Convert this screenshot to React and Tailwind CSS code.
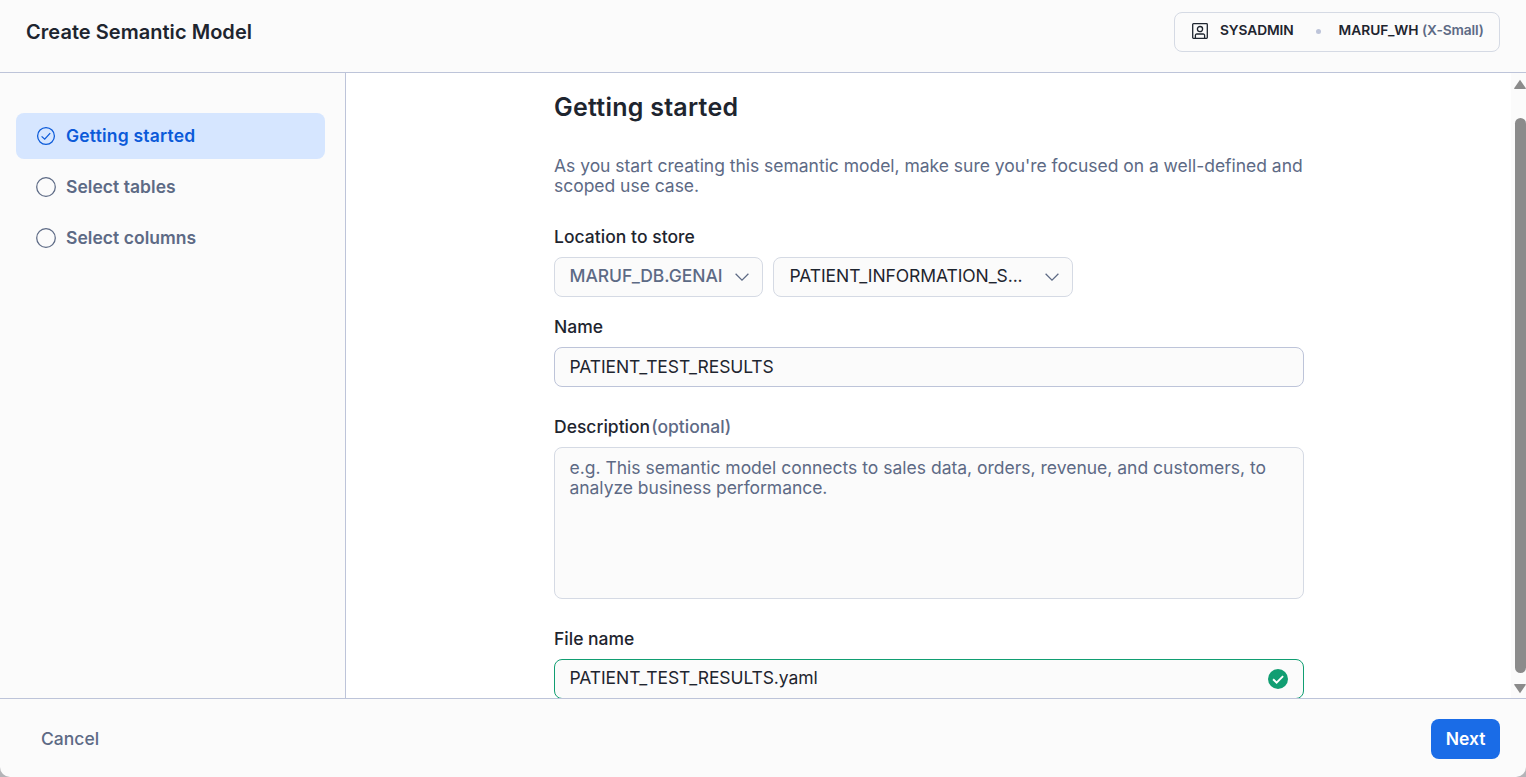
import React from "react";

const steps = [
  { label: "Getting started", active: true },
  { label: "Select tables", active: false },
  { label: "Select columns", active: false },
];

function StepIcon({ active }) {
  if (active) {
    return (
      <svg className="size-5 shrink-0" viewBox="0 0 20 20" fill="none" stroke="currentColor" strokeWidth="1.25">
        <circle cx="10" cy="10" r="8.4" />
        <path d="M5.6 10.4 8.7 13.2 14.2 7.2" />
      </svg>
    );
  }
  return (
    <svg className="size-5 shrink-0" viewBox="0 0 20 20" fill="none" stroke="currentColor" strokeWidth="1.25">
      <circle cx="10" cy="10" r="9.3" />
    </svg>
  );
}

function Chevron() {
  return (
    <svg className="h-2 w-3.5 shrink-0 text-[#5d6a85]" viewBox="0 0 14 8" fill="none" stroke="currentColor" strokeWidth="1.25">
      <path d="M0.6 0.8 7 7.1 13.4 0.8" />
    </svg>
  );
}

function RoleIcon() {
  return (
    <svg className="size-4 shrink-0" viewBox="0 0 16 16" fill="none" stroke="currentColor" strokeWidth="1.3">
      <rect x="0.7" y="0.7" width="14.6" height="14.6" rx="0.8" />
      <circle cx="8" cy="6.1" r="2.6" />
      <path d="M3.4 15v-2.6a1.4 1.4 0 0 1 1.4-1.4h6.4a1.4 1.4 0 0 1 1.4 1.4V15" />
    </svg>
  );
}

function Header() {
  return (
    <header className="flex h-[73px] shrink-0 items-start justify-between border-b border-[#bdc4d9] bg-[#fbfbfb] pr-[26px] pl-[26px]">
      <h1 className="pt-5 text-[20px] leading-[25px] font-semibold tracking-[0.04px]">Create Semantic Model</h1>
      <div className="mt-3 flex h-10 w-[326px] items-center rounded-lg border border-[#d5dae4] pb-0.5 pl-[17px] text-[13.75px] leading-5 font-semibold whitespace-nowrap">
        <RoleIcon />
        <span className="ml-3 w-[75px] pb-0.5 tracking-[-0.1px]">SYSADMIN</span>
        <span className="ml-[21px] size-[5px] rounded-full bg-[#bdc4d9]" />
        <span className="ml-[17.5px] pb-0.5">
          MARUF_WH <span className="tracking-[-0.1px] text-[#5d6a85]">(X-Small)</span>
        </span>
      </div>
    </header>
  );
}

function Sidebar() {
  return (
    <nav className="flex w-[346px] shrink-0 flex-col gap-[5px] border-r border-[#bdc4d9] bg-[#fbfbfb] px-4 pt-10">
      {steps.map((step) => (
        <div
          key={step.label}
          className={
            step.active
              ? "flex h-[46px] w-[309px] items-center gap-2.5 rounded-lg bg-[#d6e6ff] pl-5 text-[17.5px] font-semibold tracking-[0.2px] text-[#0b5ad9]"
              : "flex h-[46px] w-[309px] items-center gap-2.5 rounded-lg pl-5 text-[17.5px] font-semibold tracking-[0.04px] text-[#5d6a85]"
          }
        >
          <StepIcon active={step.active} />
          <span>{step.label}</span>
        </div>
      ))}
    </nav>
  );
}

function Scrollbar() {
  return (
    <div className="flex w-[15px] shrink-0 flex-col items-center overflow-hidden bg-[#fbfbfb] pt-[5.5px] pb-[4px] pl-[3px]">
      <svg className="h-[11px] w-3 shrink-0" viewBox="0 0 12 11" fill="#8b8b8b">
        <path d="M6 .8 11.7 9q.6 1-.5 1H.8Q-.3 10 .3 9Z" />
      </svg>
      <div className="mt-[28.5px] h-[555px] w-[11px] shrink-0 rounded-full bg-[#8b8b8b]" />
      <svg className="mt-[9.5px] h-[11px] w-3 shrink-0" viewBox="0 0 12 11" fill="#8b8b8b">
        <path d="M6 10.2 11.7 2q.6-1-.5-1H.8Q-.3 1 .3 2Z" />
      </svg>
    </div>
  );
}

function Form() {
  return (
    <main className="min-w-0 flex-1 overflow-hidden bg-white pl-[208px] text-[17.5px] leading-5">
      <div className="w-[750px]">
        <h2 className="pt-[19px] text-[25px] leading-[30px] font-semibold tracking-[0.25px]">Getting started</h2>
        <p className="mt-[34px] tracking-[-0.025px] whitespace-nowrap text-[#5d6a85]">
          As you start creating this semantic model, make sure you're focused on a well-defined and
          <br />
          scoped use case.
        </p>

        <div className="mt-[31px] font-medium tracking-[0.03px]">Location to store</div>
        <div className="mt-[10px] flex gap-2.5">
          <div className="flex h-10 w-[209px] items-center rounded-lg border border-[#d5dae4] bg-[#fbfbfb] pl-[14.5px] font-medium text-[#5d6a85]">
            <span className="w-[153px] pb-0.5 tracking-[-0.05px] whitespace-nowrap">MARUF_DB.GENAI</span>
            <span className="ml-[12.5px] flex pb-px"><Chevron /></span>
          </div>
          <div className="flex h-10 w-[300px] items-center justify-between rounded-lg border border-[#d5dae4] bg-[#fbfbfb] pr-[13px] pl-[15.5px]">
            <span className="pb-0.5 tracking-[-0.09px] whitespace-nowrap">PATIENT_INFORMATION_S...</span>
            <span className="flex pb-px"><Chevron /></span>
          </div>
        </div>

        <div className="mt-5 font-medium">Name</div>
        <div className="mt-[10px] flex h-10 items-center rounded-lg border border-[#bdc4d9] bg-[#fbfbfb] pl-[14.5px] tracking-[-0.1px]">
          PATIENT_TEST_RESULTS
        </div>

        <div className="mt-[30px] flex gap-px font-medium">
          <span>Description</span>
          <span className="text-[#5d6a85]">(optional)</span>
        </div>
        <div className="mt-[10px] h-[152px] rounded-lg border border-[#d5dae4] bg-[#fbfbfb] pt-[10px] pl-[14.5px] whitespace-nowrap text-[#5d6a85]">
          e.g. This semantic model connects to sales data, orders, revenue, and customers, to
          <br />
          <span className="tracking-[-0.04px]">analyze business performance.</span>
        </div>

        <div className="mt-[30px] font-medium">File name</div>
        <div className="mt-[10px] flex h-10 items-center justify-between rounded-lg border border-[#119e72] bg-[#fbfbfb] pr-[15px] pl-[14.5px]">
          <span className="pb-0.5 tracking-[-0.09px]">PATIENT_TEST_RESULTS.yaml</span>
          <svg className="size-5" viewBox="0 0 20 20" fill="none">
            <circle cx="10" cy="10" r="10" fill="#119e72" />
            <path d="m5.1 10.2 3.5 3.4 6.5-6.5" stroke="white" strokeWidth="1.9" />
          </svg>
        </div>
      </div>
    </main>
  );
}

function Footer() {
  return (
    <footer className="flex h-[79px] shrink-0 items-start justify-between border-t border-[#bdc4d9] bg-[#fbfbfb] pr-[26px] pl-[41px] text-[17.5px]">
      <button className="mt-5 h-10 font-medium text-[#5d6a85]">Cancel</button>
      <button className="mt-5 h-10 w-[69px] rounded-lg bg-[#1a6ce7] font-semibold text-white">Next</button>
    </footer>
  );
}

export default function App() {
  return (
    <div className="h-[777px] w-[1526px] overflow-hidden bg-[#b4b4b8]">
      <div className="flex h-full flex-col overflow-hidden rounded-b-[10px] font-['Inter',sans-serif] text-[#1e252f]">
        <Header />
        <div className="flex min-h-0 flex-1">
          <Sidebar />
          <Form />
          <Scrollbar />
        </div>
        <Footer />
      </div>
    </div>
  );
}
